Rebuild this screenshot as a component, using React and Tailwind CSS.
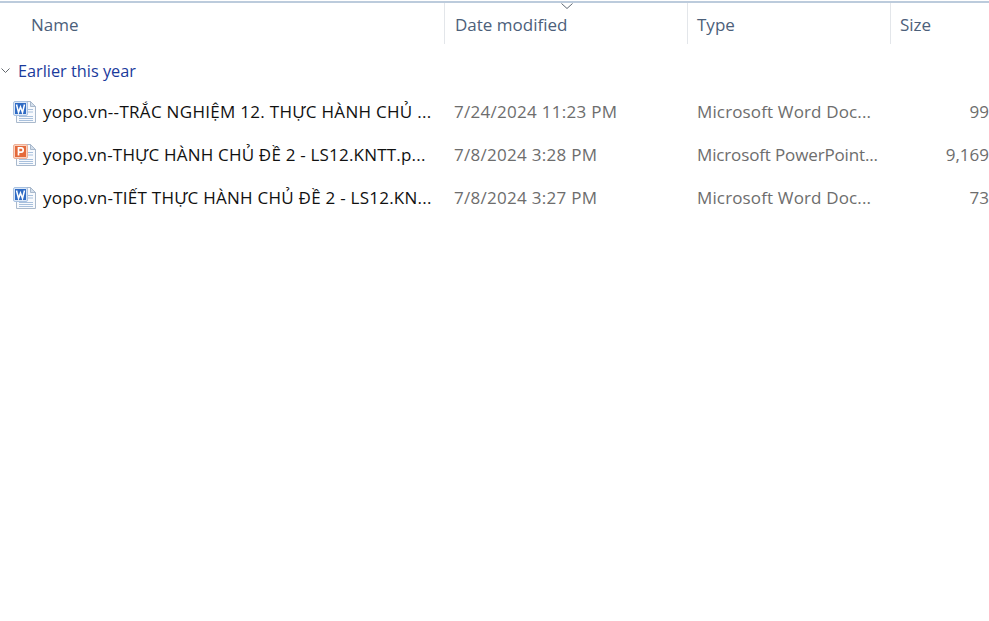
import React from 'react';

const PageLines = () => (
  <>
    <path d="M7.5 1.5H17.5L22.5 6.5V22.5H3.5V16" fill="#f8fafd" stroke="#a9b9cc" />
    <path d="M17.5 1.5V6.5H22.5Z" fill="#d3deeb" stroke="#a9b9cc" />
    <path d="M15 9.5H20M15 12H20M6 16.5H20M6 18.5H20M6 20.5H20" stroke="#a8c0dc" />
  </>
);

const WordIcon = () => (
  <svg width="24" height="24" viewBox="0 0 24 24" className="shrink-0">
    <PageLines />
    <rect x="0.5" y="1.5" width="14" height="14" rx="1.5" fill="#dbe7f6" stroke="#a9c2e2" />
    <rect x="2" y="3" width="11" height="11" fill="#2f6bc4" />
    <path d="M3.5 4.5L5.5 12.5L7.5 7L9.5 12.5L11.5 4.5" fill="none" stroke="#fff" strokeWidth="1.5" />
  </svg>
);

const PowerPointIcon = () => (
  <svg width="24" height="24" viewBox="0 0 24 24" className="shrink-0">
    <PageLines />
    <rect x="0.5" y="1.5" width="14" height="14" rx="1.5" fill="#f9d3c1" stroke="#eeb198" />
    <rect x="2" y="3" width="11" height="11" fill="#e4693a" />
    <path d="M5.5 12.5V4.8H8.3C10.8 4.8 10.8 9.2 8.3 9.2H5.5" fill="none" stroke="#fff" strokeWidth="1.7" />
  </svg>
);

const files = [
  { name: 'yopo.vn--TRẮC NGHIỆM 12. THỰC HÀNH CHỦ ...', nameClass: 'tracking-[0.3px]', date: '7/24/2024 11:23 PM', type: 'Microsoft Word Doc...', typeClass: 'tracking-[0.14px]', size: '99', icon: <WordIcon /> },
  { name: 'yopo.vn-THỰC HÀNH CHỦ ĐỀ 2 - LS12.KNTT.p...', nameClass: 'tracking-[0.2px]', date: '7/8/2024 3:28 PM', type: 'Microsoft PowerPoint...', typeClass: 'tracking-[-0.14px]', size: '9,169', icon: <PowerPointIcon /> },
  { name: 'yopo.vn-TIẾT THỰC HÀNH CHỦ ĐỀ 2 - LS12.KN...', nameClass: 'tracking-[0.25px]', date: '7/8/2024 3:27 PM', type: 'Microsoft Word Doc...', typeClass: 'tracking-[0.14px]', size: '73', icon: <WordIcon /> },
];

const App = () => {
  return (
    <div className="relative w-[989px] h-[621px] overflow-hidden bg-white font-['Open_Sans','Noto_Sans',sans-serif] text-[17px]">
      <div className="mt-px h-[2px] bg-[#bccbdc]" />

      {/* Column headers */}
      <div className="flex h-[41px] text-[#4c607a]">
        <div className="w-[445px] pl-[31px] pt-[9px] border-r border-[#e3e6ea]">Name</div>
        <div className="w-[243px] pl-[10px] pt-[9px] border-r border-[#e3e6ea]">Date modified</div>
        <div className="w-[203px] pl-[9px] pt-[9px] border-r border-[#e3e6ea]">Type</div>
        <div className="flex-1 pl-[9px] pt-[9px]">Size</div>
      </div>
      <svg width="12" height="7" viewBox="0 0 12 7" className="absolute left-[561px] top-[3px]">
        <path d="M0.5 0.5L6 5.5L11.5 0.5" fill="none" stroke="#5f6873" />
      </svg>

      {/* Group */}
      <div className="flex items-center h-[26px] mt-[14px] text-[16.3px] text-[#1a3a9c]">
        <svg width="10" height="6" viewBox="0 0 10 6" className="ml-px mr-[7px]">
          <path d="M0.5 0.5L4.5 4.5L8.5 0.5" fill="none" stroke="#62676d" />
        </svg>
        Earlier this year
      </div>

      {/* Files */}
      <div className="mt-[6px]">
        {files.map((file) => (
          <div key={file.name} className="flex items-center h-[43px]">
            <div className={`flex items-center w-[445px] pl-[13px] gap-[6px] text-[#111] ${file.nameClass}`}>
              {file.icon}
              <span className="whitespace-nowrap">{file.name}</span>
            </div>
            <div className="w-[243px] pl-[9px] text-[#6d6d6d] tracking-[0.28px] whitespace-nowrap">{file.date}</div>
            <div className={`w-[203px] pl-[9px] text-[#6d6d6d] whitespace-nowrap ${file.typeClass}`}>{file.type}</div>
            <div className="w-[98px] text-right text-[#6d6d6d]">{file.size}</div>
          </div>
        ))}
      </div>
    </div>
  );
};

export default App;
